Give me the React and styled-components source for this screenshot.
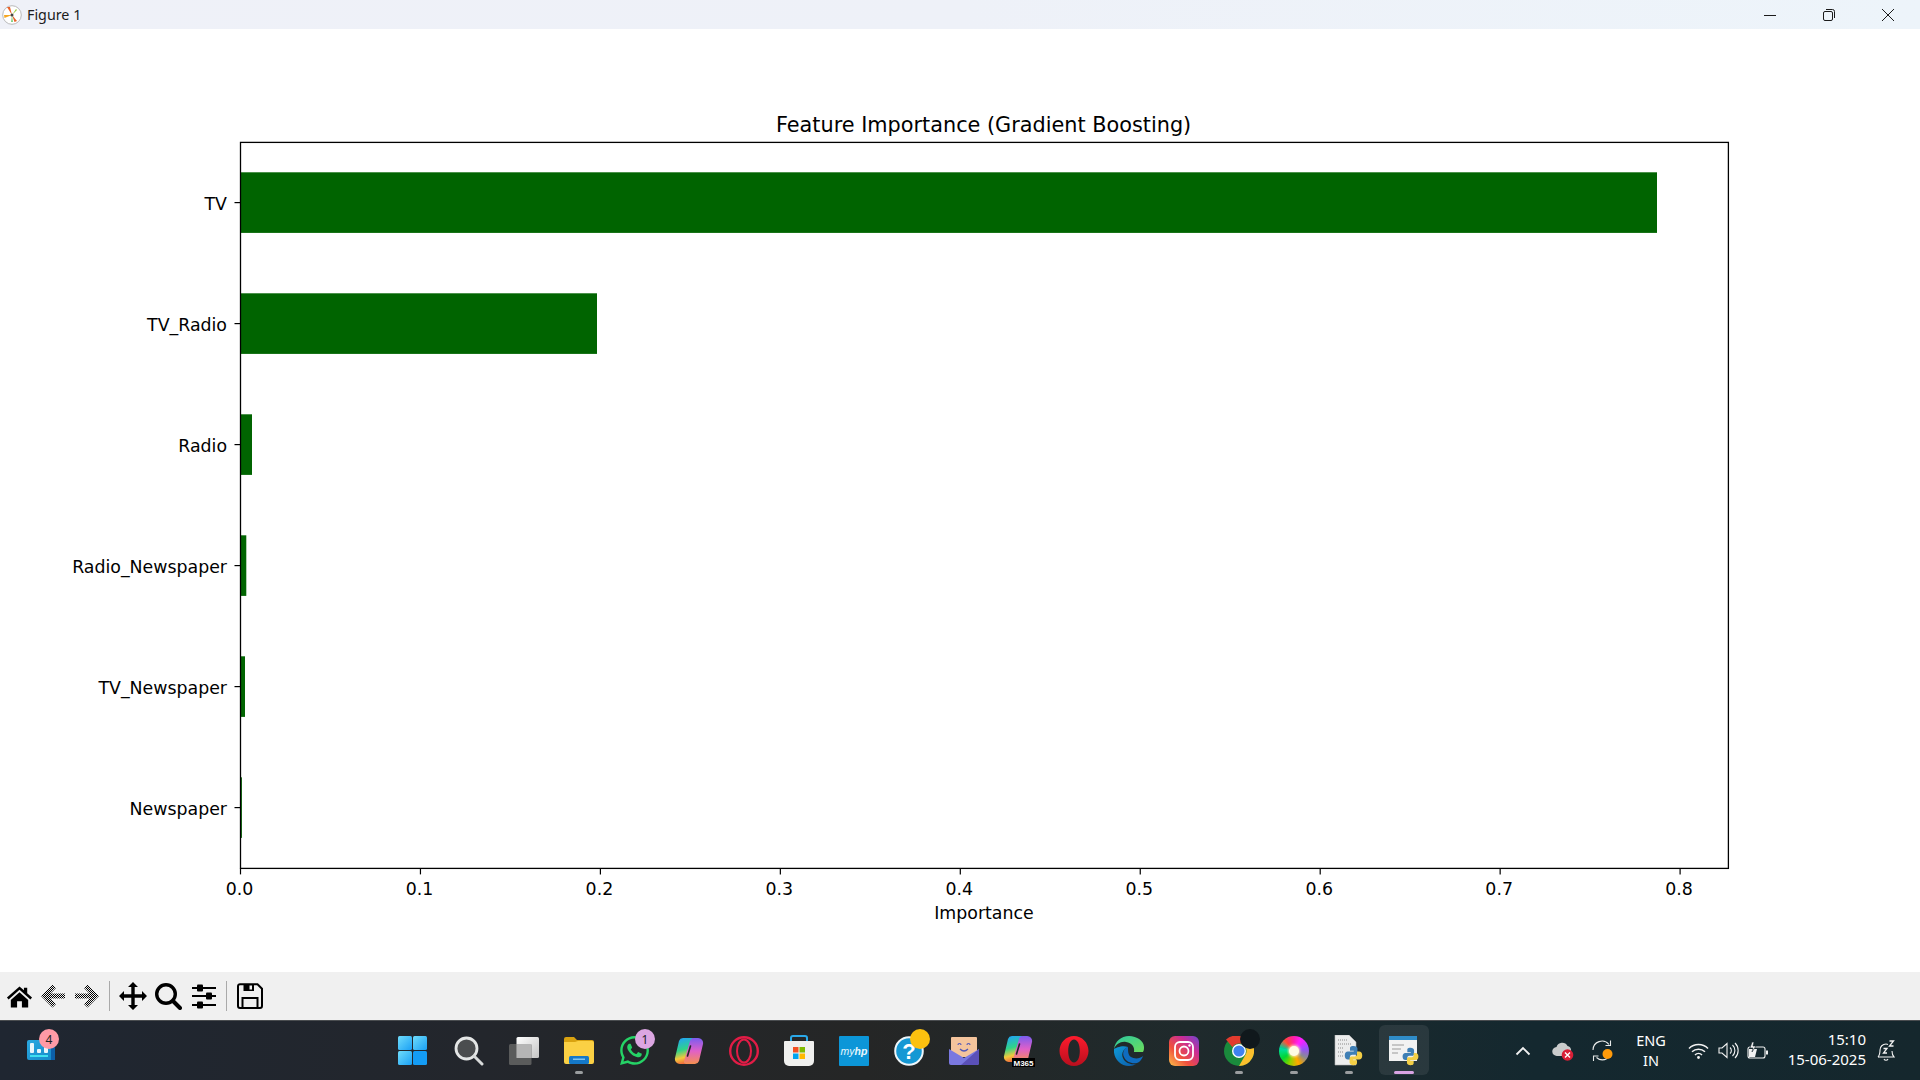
import React from "react";
import styled, { createGlobalStyle } from "styled-components";
import { FaWhatsapp } from "react-icons/fa";

const GlobalStyle = createGlobalStyle`
  html, body {
    margin: 0;
    padding: 0;
    width: 1920px;
    height: 1080px;
    overflow: hidden;
    background: #fff;
  }
`;

const Screen = styled.div`
  display: flex;
  flex-direction: column;
  width: 1920px;
  height: 1080px;
  font-family: "Noto Sans", "Open Sans", sans-serif;
`;

const TitleBar = styled.div`
  display: flex;
  align-items: center;
  flex: 0 0 29px;
  padding: 0 3px 0 2px;
  background: linear-gradient(90deg, #eff1f8 0%, #eef1f8 50%, #edf4fa 100%);
`;

const TitleText = styled.span`
  margin-left: 5px;
  font-size: 14.3px;
  color: #1c1c1c;
`;

const WindowControls = styled.div`
  display: flex;
  margin-left: auto;
`;

const WindowButton = styled.div`
  display: flex;
  align-items: center;
  justify-content: center;
  width: 59px;
  height: 29px;
  padding-left: ${(p) => p.$nudge || 0}px;
`;

const PlotArea = styled.div`
  flex: 1;
  min-height: 0;
  background: #fff;

  svg {
    display: block;
  }
  text {
    font-family: "DejaVu Sans", sans-serif;
    fill: #000;
  }
`;

const Toolbar = styled.div`
  display: flex;
  align-items: center;
  flex: 0 0 48px;
  padding-left: 2px;
  background: #f0f0f0;
`;

const ToolButton = styled.div`
  display: flex;
  align-items: center;
  justify-content: center;
  width: ${(p) => p.$w}px;
  height: 48px;
`;

const ToolSeparator = styled.div`
  width: 1px;
  height: 30px;
  margin: 0 5px 0 ${(p) => p.$before}px;
  background: #a9a9a9;
`;

const Taskbar = styled.div`
  display: grid;
  grid-template-columns: 384.5px auto 1fr;
  flex: 0 0 60px;
  box-sizing: border-box;
  border-top: 1px solid #4a4d50;
  background: linear-gradient(90deg, #1f2631 0%, #23262c 25%, #252626 45%, #1f2a2c 62%, #14282f 80%, #15272d 100%);
  color: #fff;
`;

const WidgetCell = styled.div`
  position: relative;
  padding: 19px 0 0 27px;
`;

const AppList = styled.div`
  display: flex;
`;

const AppCell = styled.div`
  position: relative;
  display: flex;
  align-items: center;
  justify-content: center;
  width: 55px;
  height: 59px;
  margin-right: ${(p) => p.$gap || 0}px;

  ${(p) =>
    p.$active &&
    `
    &::before {
      content: "";
      position: absolute;
      left: 2.5px;
      top: 4px;
      width: 50px;
      height: 50px;
      border-radius: 6px;
      background: rgba(255, 255, 255, 0.08);
    }
  `}

  ${(p) =>
    (p.$running || p.$active) &&
    `
    &::after {
      content: "";
      position: absolute;
      left: 50%;
      bottom: 6px;
      width: ${p.$active ? 20 : 8}px;
      height: 3px;
      border-radius: 2px;
      transform: translateX(-50%);
      background: ${p.$active ? "#d9a3e3" : "#9a9d9f"};
    }
  `}

  svg {
    position: relative;
    z-index: 1;
  }
`;

const Badge = styled.span`
  position: absolute;
  z-index: 2;
  left: ${(p) => p.$left}px;
  top: ${(p) => p.$top}px;
  display: flex;
  align-items: center;
  justify-content: center;
  width: 20px;
  height: 20px;
  border-radius: 50%;
  font-size: 12px;
  color: #222;
  background: ${(p) => p.$color};
`;

const RainbowWheel = styled.div`
  position: relative;
  width: 30px;
  height: 30px;
  border-radius: 50%;
  filter: blur(0.7px) saturate(1.3);
  background: conic-gradient(#f02c9c, #d030f0, #8c58d8, #8a8a90, #f0a818, #98cc20, #18c850, #10d0a0, #f05040, #f02c9c);

  &::after {
    content: "";
    position: absolute;
    left: 10px;
    top: 10px;
    width: 10px;
    height: 10px;
    border-radius: 50%;
    background: #fffbe8;
    box-shadow: 0 0 3px 1px #ffe8c0;
  }
`;

const Tray = styled.div`
  display: flex;
  align-items: center;
  justify-self: end;
  height: 59px;
  padding-right: 22px;
`;

const TrayCell = styled.div`
  display: flex;
  align-items: center;
  justify-content: center;
  width: ${(p) => p.$w}px;
  height: 59px;
`;

const LangBox = styled.div`
  width: 56px;
  margin-right: 4px;
  padding-bottom: 1px;
  font-size: 14.5px;
  line-height: 20px;
  text-align: center;
`;

const ClockBox = styled.div`
  width: 93px;
  margin-right: 8px;
  padding-bottom: 4px;
  font-size: 15px;
  line-height: 20px;
  text-align: right;
  white-space: nowrap;
`;

const rows = [
  { name: "TV", width: 1416.5 },
  { name: "TV_Radio", width: 356.5 },
  { name: "Radio", width: 11.5 },
  { name: "Radio_Newspaper", width: 5.8 },
  { name: "TV_Newspaper", width: 4.5 },
  { name: "Newspaper", width: 1.4 },
];

const AX = { left: 240.5, right: 1728.4, top: 142.4, bottom: 868.4 };
const xTicks = ["0.0", "0.1", "0.2", "0.3", "0.4", "0.5", "0.6", "0.7", "0.8"];

const Chart = () => (
  <svg width="1920" height="943" viewBox="0 29 1920 943">
    <text x="983.6" y="132" fontSize="20.8" textAnchor="middle">
      Feature Importance (Gradient Boosting)
    </text>
    {rows.map((r, i) => {
      const cy = 202.6 + i * 121;
      return (
        <g key={r.name}>
          <rect x={AX.left} y={cy - 30.3} width={r.width} height={60.6} fill="#006400" />
          <line x1={234.5} x2={AX.left} y1={cy} y2={cy} stroke="#000" strokeWidth="1.2" />
          <text x="227" y={cy + 7.3} fontSize="17.36" textAnchor="end">
            {r.name}
          </text>
        </g>
      );
    })}
    <rect
      x={AX.left}
      y={AX.top}
      width={AX.right - AX.left}
      height={AX.bottom - AX.top}
      fill="none"
      stroke="#000"
      strokeWidth="1.3"
    />
    {xTicks.map((t, i) => {
      const x = AX.left + i * 179.95;
      return (
        <g key={t}>
          <line x1={x} x2={x} y1={AX.bottom} y2={AX.bottom + 6} stroke="#000" strokeWidth="1.2" />
          <text x={x - 1} y="895" fontSize="17.36" textAnchor="middle">
            {t}
          </text>
        </g>
      );
    })}
    <text x="984" y="919" fontSize="17.36" textAnchor="middle">
      Importance
    </text>
  </svg>
);

const LogoIcon = () => (
  <svg width="20" height="20" viewBox="0 0 20 20">
    <circle cx="10" cy="10" r="9.3" fill="#fff" stroke="#aaa" strokeWidth="0.8" />
    <path d="M10 10 L5 2 L8 2 Z" fill="#e8622a" />
    <path d="M10 10 L15 16 L12.5 17 Z" fill="#e8622a" />
    <path d="M10 10 L2 10 L2.5 13 Z" fill="#f5a623" />
    <path d="M10 10 L14 4 L15 5 Z" fill="#9ccc3c" />
    <path d="M10 10 L9 17 L11 17 Z" fill="#7fd07f" />
    <circle cx="10" cy="10" r="1.5" fill="#444" />
  </svg>
);

const MinimizeIcon = () => (
  <svg width="12" height="12" viewBox="0 0 12 12">
    <line x1="0" x2="12" y1="6.5" y2="6.5" stroke="#1a1a1a" />
  </svg>
);

const RestoreIcon = () => (
  <svg width="12" height="12" viewBox="0 0 12 12" fill="none" stroke="#1a1a1a">
    <rect x="0.5" y="2.5" width="9" height="9" rx="1.5" />
    <path d="M3 0.5h6.5a2 2 0 0 1 2 2V9" />
  </svg>
);

const CloseIcon = () => (
  <svg width="12" height="12" viewBox="0 0 12 12" stroke="#1a1a1a">
    <path d="M0 0L12 12M12 0L0 12" />
  </svg>
);

const HomeIcon = () => (
  <svg width="27" height="27" viewBox="0 0 28 28">
    <path d="M14 3.5L1 15l1.7 2L14 7l11.3 10 1.7-2-5-4.4V5h-3.4v2.6z" />
    <path d="M5 17.5L14 9.5l9 8V25.500h-6.500v-6.500h-5v6.500H5z" />
  </svg>
);

const ArrowIcon = ({ flip }) => (
  <svg width="26" height="26" viewBox="0 0 26 26" style={flip ? { transform: "scaleX(-1)" } : undefined}>
    <defs>
      <pattern id={flip ? "ditherR" : "ditherL"} width="2" height="2" patternUnits="userSpaceOnUse">
        <rect width="1" height="1" fill="#000" />
        <rect x="1" y="1" width="1" height="1" fill="#000" />
      </pattern>
    </defs>
    <path
      d="M1 13L12.500 1.500 16 5l-5.500 5.500H25v5H10.500L16 21l-3.500 3.500z"
      fill={`url(#${flip ? "ditherR" : "ditherL"})`}
    />
  </svg>
);

const MoveIcon = () => (
  <svg width="28" height="28" viewBox="0 0 28 28">
    <path d="M14 0l5 5h-3.300v7.300H23V9l5 5-5 5v-3.300h-7.300V23H19l-5 5-5-5h3.300v-7.300H5V19l-5-5 5-5v3.300h7.300V5H9z" />
  </svg>
);

const ZoomIcon = () => (
  <svg width="28" height="28" viewBox="0 0 28 28" fill="none" stroke="#000">
    <circle cx="12" cy="12" r="9.300" strokeWidth="3.400" />
    <path d="M19 19l7 7" strokeWidth="4" strokeLinecap="round" />
  </svg>
);

const SlidersIcon = () => (
  <svg width="26" height="26" viewBox="0 0 26 26">
    <path d="M1 4h24v2H1zM1 12h24v2H1zM1 21h24v2H1z" />
    <rect x="6" y="1.500" width="6" height="7" rx="1" />
    <rect x="15" y="9.500" width="6" height="7" rx="1" />
    <rect x="6" y="18.500" width="6" height="7" rx="1" />
  </svg>
);

const SaveIcon = () => (
  <svg width="26" height="26" viewBox="0 0 26 26" fill="none" stroke="#000" strokeWidth="2">
    <path d="M3 1.200h17.500L25 5.700V23a2 2 0 0 1-2 2H3a2 2 0 0 1-2-2V3.200a2 2 0 0 1 2-2z" />
    <rect x="5.500" y="15" width="15" height="10" />
    <rect x="6.500" y="1.200" width="10.500" height="6.800" fill="#000" stroke="none" />
    <rect x="12.500" y="2.500" width="2.500" height="4" fill="#f0f0f0" stroke="none" />
  </svg>
);

const WidgetIcon = () => (
  <svg width="28" height="21" viewBox="0 0 28 21">
    <defs>
      <linearGradient id="widgetBg" x1="0" y1="0" x2="1" y2="1">
        <stop offset="0" stopColor="#2aa8e0" />
        <stop offset="1" stopColor="#1488c8" />
      </linearGradient>
    </defs>
    <rect x="0" y="0" width="28" height="20" rx="2" fill="url(#widgetBg)" />
    <rect x="24" y="1" width="4" height="19" fill="#0c5fa8" />
    <rect x="3" y="3" width="4" height="10" rx="1" fill="#eaf6fc" />
    <rect x="10" y="9" width="4" height="4" rx="1" fill="#eaf6fc" />
    <rect x="17" y="6" width="4" height="7" rx="1" fill="#eaf6fc" />
    <rect x="3" y="15" width="18" height="2" fill="#3fe0f0" />
  </svg>
);

const StartIcon = () => (
  <svg width="29" height="29" viewBox="0 0 29 29">
    <defs>
      <linearGradient id="startA" x1="0" y1="0" x2="1" y2="1">
        <stop offset="0" stopColor="#6fdcfb" />
        <stop offset="1" stopColor="#1aa0f5" />
      </linearGradient>
    </defs>
    <rect width="14" height="14" rx="1.500" fill="url(#startA)" />
    <rect x="15" width="14" height="14" rx="1.500" fill="url(#startA)" />
    <rect y="15" width="14" height="14" rx="1.500" fill="url(#startA)" />
    <rect x="15" y="15" width="14" height="14" rx="1.500" fill="#149cf5" />
  </svg>
);

const SearchIcon = () => (
  <svg width="30" height="30" viewBox="0 0 30 30" fill="none">
    <circle cx="12.500" cy="12.500" r="10.500" fill="#4b4d4f" stroke="#e4e6e6" strokeWidth="2.800" />
    <path d="M20 20l8 8" stroke="#d8dada" strokeWidth="3" strokeLinecap="round" />
  </svg>
);

const TaskViewIcon = () => (
  <svg width="30" height="28" viewBox="0 0 30 28">
    <defs>
      <linearGradient id="tvFront" x1="0" y1="0" x2="1" y2="1">
        <stop offset="0" stopColor="#ffffff" />
        <stop offset="1" stopColor="#c4c4c4" />
      </linearGradient>
    </defs>
    <rect x="7.500" y="0" width="22.500" height="21" rx="1.500" fill="url(#tvFront)" />
    <rect x="0" y="7" width="22.500" height="21" rx="1.500" fill="#5f5f5f" fillOpacity="0.92" />
    <rect x="7.500" y="7" width="15" height="14" fill="#b5b5b5" />
  </svg>
);

const FolderIcon = () => (
  <svg width="30" height="27" viewBox="0 0 30 27">
    <path d="M0 2a2 2 0 0 1 2-2h8l3 3h15a2 2 0 0 1 2 2v3H0z" fill="#d9a210" />
    <path d="M0 5h11l3-1h14a2 2 0 0 1 2 2v19a2 2 0 0 1-2 2H2a2 2 0 0 1-2-2z" fill="#fbd044" />
    <rect x="5" y="19" width="20" height="8" rx="1.500" fill="#1478c8" />
    <rect x="9" y="21.500" width="12" height="1.500" fill="#7fc4f0" />
  </svg>
);

const COPILOT_BLOB = "M9 1h9a2 2 0 0 1 2 2.500L14 24a4 4 0 0 1-4 3H6a5 5 0 0 1-5-6L5 4a4.500 4.500 0 0 1 4-3z";

const CopilotShape = ({ id }) => (
  <>
    <defs>
      <linearGradient id={`${id}a`} x1="0.3" y1="0" x2="0.5" y2="1">
        <stop offset="0" stopColor="#22a4f4" />
        <stop offset="0.45" stopColor="#30d488" />
        <stop offset="0.75" stopColor="#f4c83c" />
        <stop offset="1" stopColor="#f0603c" />
      </linearGradient>
      <linearGradient id={`${id}b`} x1="0.5" y1="1" x2="0.5" y2="0">
        <stop offset="0" stopColor="#7a5cf0" />
        <stop offset="0.5" stopColor="#e060c8" />
        <stop offset="1" stopColor="#f59050" />
      </linearGradient>
    </defs>
    <path d={COPILOT_BLOB} fill={`url(#${id}a)`} />
    <path d={COPILOT_BLOB} transform="rotate(180 15 14)" fill={`url(#${id}b)`} />
    <path d="M16.500 9L13.500 19" stroke="#232426" strokeWidth="1.600" strokeLinecap="round" />
  </>
);

const CopilotIcon = ({ id }) => (
  <svg width="30" height="28" viewBox="0 0 30 28">
    <CopilotShape id={id} />
  </svg>
);

const OperaGxIcon = () => (
  <svg width="30" height="30" viewBox="0 0 30 30" fill="none" stroke="#e21c46">
    <circle cx="15" cy="15" r="13.800" strokeWidth="2.400" />
    <ellipse cx="15" cy="15" rx="7" ry="11.500" strokeWidth="2" />
  </svg>
);

const StoreIcon = () => (
  <svg width="30" height="31" viewBox="0 0 30 31">
    <path d="M7 7V3a2 2 0 0 1 2-2h12a2 2 0 0 1 2 2v4" fill="none" stroke="#2aa8e8" strokeWidth="2" />
    <path d="M1 6h28a1 1 0 0 1 1 1v19a5 5 0 0 1-5 5H5a5 5 0 0 1-5-5V7a1 1 0 0 1 1-1z" fill="#f0f0ee" />
    <rect x="9" y="12" width="5.500" height="5.500" fill="#f25022" />
    <rect x="15.500" y="12" width="5.500" height="5.500" fill="#7fba00" />
    <rect x="9" y="18.500" width="5.500" height="5.500" fill="#00a4ef" />
    <rect x="15.500" y="18.500" width="5.500" height="5.500" fill="#ffb900" />
  </svg>
);

const MyHpIcon = () => (
  <svg width="30" height="30" viewBox="0 0 30 30">
    <rect width="30" height="30" rx="1" fill="#0c96d8" />
    <text x="15" y="19" fontSize="10.500" fontStyle="italic" textAnchor="middle" fill="#e8f6fc" fontFamily="Liberation Sans, sans-serif">
      my<tspan fontWeight="700">hp</tspan>
    </text>
  </svg>
);

const HelpIcon = () => (
  <svg width="30" height="30" viewBox="0 0 30 30">
    <circle cx="15" cy="15" r="13.800" fill="#1598d4" stroke="#eef6fa" strokeWidth="2" />
    <text x="15" y="23" fontSize="22" fontWeight="700" textAnchor="middle" fill="#fff" fontFamily="Liberation Sans, sans-serif">
      ?
    </text>
  </svg>
);

const MailIcon = () => (
  <svg width="30" height="28" viewBox="0 0 30 28">
    <rect x="2" y="0" width="26" height="20" rx="1" fill="#f4c49c" />
    <path d="M9 8a1.500 1.500 0 0 1 3 0M18 8a1.500 1.500 0 0 1 3 0M11 12q4 4 8 0" fill="none" stroke="#5058b8" strokeWidth="1.200" />
    <path d="M0 12l15 9 15-9v14a2 2 0 0 1-2 2H2a2 2 0 0 1-2-2z" fill="#7a78e0" />
    <path d="M30 12v14a2 2 0 0 1-2 2H12z" fill="#5a50b8" />
  </svg>
);

const M365Icon = () => (
  <svg width="32" height="32" viewBox="0 0 32 32">
    <CopilotShape id="m365" />
    <rect x="9" y="23" width="23" height="9" fill="#000" />
    <text x="20.500" y="30.500" fontSize="8" fontWeight="700" textAnchor="middle" fill="#fff" fontFamily="Liberation Sans, sans-serif">
      M365
    </text>
  </svg>
);

const OperaIcon = () => (
  <svg width="30" height="30" viewBox="0 0 30 30">
    <defs>
      <linearGradient id="operaRed" x1="0" y1="0" x2="0" y2="1">
        <stop offset="0" stopColor="#ff1b2d" />
        <stop offset="1" stopColor="#b80f1e" />
      </linearGradient>
    </defs>
    <path
      fillRule="evenodd"
      fill="url(#operaRed)"
      d="M15 0C7 0 .5 6.700.5 15S7 30 15 30s14.500-6.700 14.500-15S23 0 15 0zM15 3.500c3.500 0 5.800 5 5.800 11.500S18.500 26.500 15 26.500 9.200 21.500 9.200 15 11.500 3.500 15 3.500z"
    />
  </svg>
);

const EdgeIcon = () => (
  <svg width="30" height="30" viewBox="0 0 30 30">
    <defs>
      <linearGradient id="edgeA" x1="0" y1="0" x2="1" y2="1">
        <stop offset="0" stopColor="#2cc8a0" />
        <stop offset="1" stopColor="#6cdc5c" />
      </linearGradient>
      <linearGradient id="edgeB" x1="0" y1="0" x2="1" y2="1">
        <stop offset="0" stopColor="#0f9ad8" />
        <stop offset="1" stopColor="#0c5aa8" />
      </linearGradient>
    </defs>
    <path d="M15 0C7 0 1 5.500 0 13c2-5 7-8 12-7 6 1 9 5 8 10h9c1-2 1-3 1-5C30 5 23 0 15 0z" fill="url(#edgeA)" />
    <path d="M0 13c-1 9 6 17 15 17 3 0 5-1 7-2-5 1-11-1-13-6-2-4 0-9 5-11-6-2-12 1-14 2z" fill="url(#edgeB)" />
    <path d="M14 11c-4 1-6 6-4 10 2 5 8 7 13 6 3-1 5-4 6-7-3 3-9 3-12 1-3-2-3-6-3-10z" fill="#0f6cc0" />
  </svg>
);

const InstagramIcon = () => (
  <svg width="30" height="30" viewBox="0 0 30 30">
    <defs>
      <linearGradient id="igBg" x1="0" y1="1" x2="1" y2="0">
        <stop offset="0" stopColor="#fdc14a" />
        <stop offset="0.35" stopColor="#f0503c" />
        <stop offset="0.7" stopColor="#c82c98" />
        <stop offset="1" stopColor="#6a48d0" />
      </linearGradient>
    </defs>
    <rect width="30" height="30" rx="6" fill="url(#igBg)" />
    <rect x="6" y="6" width="18" height="18" rx="5" fill="none" stroke="#fff" strokeWidth="1.800" />
    <circle cx="15" cy="15" r="4.500" fill="none" stroke="#fff" strokeWidth="1.800" />
    <circle cx="20.500" cy="9.500" r="1.200" fill="#fff" />
  </svg>
);

const ChromeIcon = () => (
  <svg width="30" height="30" viewBox="0 0 30 30">
    <circle cx="15" cy="15" r="15" fill="#1a8a3c" />
    <path d="M15 0a15 15 0 0 1 13 7.500H15a7.500 7.500 0 0 0-6.500 3.750L2 3.500A15 15 0 0 1 15 0z" fill="#e33b2e" />
    <path d="M28 7.500A15 15 0 0 1 15 30l6.500-11.250A7.500 7.500 0 0 0 15 7.500z" fill="#fbc02d" />
    <circle cx="15" cy="15" r="7" fill="#fff" />
    <circle cx="15" cy="15" r="5.600" fill="#3f82f0" />
  </svg>
);

const PyLogo = ({ x, y, size }) => (
  <g transform={`translate(${x} ${y}) scale(${size / 24})`}>
    <path d="M12 1C8 1 8 2.700 8 4v2.500h4.300v1H5.500C3.500 7.500 2 9 2 12s1.500 4.500 3.500 4.500H8v-3C8 12 9 11 10.500 11h4c1.200 0 2-1 2-2V4c0-1.700-1.800-3-4.500-3z" fill="#3f7fb5" />
    <path d="M12 23c4 0 4-1.700 4-3v-2.500h-4.300v-1h6.800c2 0 3.500-1.500 3.500-4.500s-1.500-4.500-3.500-4.500H16v3c0 1.500-1 2.500-2.500 2.500h-4c-1.200 0-2 1-2 2v5c0 1.700 1.800 3 4.500 3z" fill="#f4cf46" />
  </g>
);

const PyFileIcon = () => (
  <svg width="30" height="32" viewBox="0 0 30 32">
    <path d="M1 0h14l7 7v23H1z" fill="#eceded" stroke="#b5b5b5" strokeWidth="0.600" />
    <path d="M4 5h9M4 9h13M4 13h6M4 17h5M4 21h5" stroke="#8a8a8a" strokeDasharray="1 1" />
    <PyLogo x={9} y={10} size={21} />
  </svg>
);

const PyWindowIcon = () => (
  <svg width="30" height="30" viewBox="0 0 30 30">
    <rect x="0" y="0" width="28" height="25" fill="#f2f2f2" />
    <rect x="0" y="0" width="28" height="4" fill="#2f8cc8" />
    <path d="M3 9h12M3 13h9M3 17h6" stroke="#9a9a9a" strokeWidth="1.200" />
    <PyLogo x={12} y={11} size={19} />
  </svg>
);

const ChevronIcon = () => (
  <svg width="16" height="10" viewBox="0 0 16 10" fill="none" stroke="#f2f2f2" strokeWidth="1.800">
    <path d="M1.500 8.500L8 2l6.500 6.500" />
  </svg>
);

const CloudIcon = () => (
  <svg width="22" height="22" viewBox="0 0 22 22">
    <path d="M5 16a4.500 4.500 0 0 1-.5-9 6 6 0 0 1 11-1 4.500 4.500 0 0 1 1 8.500V16z" fill="#c9cbcb" />
    <circle cx="15.500" cy="15" r="5.800" fill="#d81f36" />
    <path d="M13 12.500l5 5M18 12.500l-5 5" stroke="#fff" strokeWidth="1.400" />
  </svg>
);

const SyncIcon = () => (
  <svg width="22" height="24" viewBox="0 0 22 24" fill="none" stroke="#e8eaea" strokeWidth="1.100">
    <path d="M1 11a9 9 0 0 1 16-5.500" />
    <path d="M18.500 1.500v5h-5" />
    <path d="M15 19.500a9 9 0 0 1-10.500-1" />
    <path d="M1.500 22v-5h5" />
    <circle cx="15.500" cy="15" r="5" fill="#ff9a0a" stroke="none" />
  </svg>
);

const WifiIcon = () => (
  <svg width="21" height="16" viewBox="0 0 21 16" fill="none" stroke="#f2f2f2" strokeWidth="1.500">
    <path d="M1 5.500a13.500 13.500 0 0 1 19 0" />
    <path d="M4 8.800a9.500 9.500 0 0 1 13 0" />
    <path d="M7 12a5 5 0 0 1 7 0" />
    <circle cx="10.500" cy="14.500" r="1.400" fill="#f2f2f2" stroke="none" />
  </svg>
);

const VolumeIcon = () => (
  <svg width="21" height="17" viewBox="0 0 21 17" fill="none" stroke="#f2f2f2" strokeWidth="1.100">
    <path d="M1 6h3l5-4.500v14L4 11H1z" />
    <path d="M12 5.500a4 4 0 0 1 0 6" />
    <path d="M14.500 3a7.500 7.500 0 0 1 0 11" />
    <path d="M17 1a10.500 10.500 0 0 1 0 15" />
  </svg>
);

const BatteryIcon = () => (
  <svg width="22" height="18" viewBox="0 0 22 18" fill="none" stroke="#f2f2f2" strokeWidth="1.100">
    <rect x="1" y="5" width="17" height="11" rx="2" />
    <rect x="19" y="8.500" width="2" height="4" fill="#f2f2f2" stroke="none" />
    <path d="M2 15V7h8l-2 8z" fill="#f2f2f2" stroke="none" />
    <path d="M5 0L3 6h3l-1 4 4-6H6l1-4z" fill="#f2f2f2" stroke="#15272d" strokeWidth="0.600" />
  </svg>
);

const BellIcon = () => (
  <svg width="18" height="22" viewBox="0 0 18 22" fill="none" stroke="#f2f2f2" strokeWidth="1.100">
    <path d="M1 17c2-2 2-4 2-7a6 6 0 0 1 6-6c1 0 1.500.2 2 .4" />
    <path d="M15 11c0 2.500.5 4.500 2 6H1" />
    <path d="M7 19a2.200 2.200 0 0 0 4 0" />
    <path d="M6.500 8.500h3.500L6.500 13H10" strokeWidth="1.300" />
    <path d="M12.500 1h4l-4 5h4" strokeWidth="1.300" />
  </svg>
);

const apps = [
  { key: "start", icon: <StartIcon />, gap: 2 },
  { key: "search", icon: <SearchIcon /> },
  { key: "tasks", icon: <TaskViewIcon /> },
  { key: "files", icon: <FolderIcon />, running: true },
  { key: "whatsapp", icon: <FaWhatsapp size={33} color="#25d366" />, badge: { text: "1", color: "#dca6e2" } },
  { key: "copilot", icon: <CopilotIcon id="cop" /> },
  { key: "operagx", icon: <OperaGxIcon /> },
  { key: "store", icon: <StoreIcon /> },
  { key: "myhp", icon: <MyHpIcon /> },
  { key: "help", icon: <HelpIcon />, badge: { text: "", color: "#fcc10f" } },
  { key: "mail", icon: <MailIcon /> },
  { key: "m365", icon: <M365Icon /> },
  { key: "opera", icon: <OperaIcon /> },
  { key: "edge", icon: <EdgeIcon /> },
  { key: "instagram", icon: <InstagramIcon /> },
  { key: "chrome", icon: <ChromeIcon />, running: true, badge: { text: "", color: "#10181c" } },
  { key: "wheel", icon: <RainbowWheel />, running: true },
  { key: "pyfile", icon: <PyFileIcon />, running: true },
  { key: "pywindow", icon: <PyWindowIcon />, active: true },
];

const App = () => (
  <>
    <GlobalStyle />
    <Screen>
      <TitleBar>
        <LogoIcon />
        <TitleText>Figure 1</TitleText>
        <WindowControls>
          <WindowButton $nudge={3}><MinimizeIcon /></WindowButton>
          <WindowButton><RestoreIcon /></WindowButton>
          <WindowButton><CloseIcon /></WindowButton>
        </WindowControls>
      </TitleBar>
      <PlotArea>
        <Chart />
      </PlotArea>
      <Toolbar>
        <ToolButton $w={34}><HomeIcon /></ToolButton>
        <ToolButton $w={34}><ArrowIcon /></ToolButton>
        <ToolButton $w={34}><ArrowIcon flip /></ToolButton>
        <ToolSeparator $before={5} />
        <ToolButton $w={35.5}><MoveIcon /></ToolButton>
        <ToolButton $w={35.5}><ZoomIcon /></ToolButton>
        <ToolButton $w={35.5}><SlidersIcon /></ToolButton>
        <ToolSeparator $before={4.5} />
        <ToolButton $w={35}><SaveIcon /></ToolButton>
      </Toolbar>
      <Taskbar>
        <WidgetCell>
          <WidgetIcon />
          <Badge $color="#ff9aa6" $left={39} $top={8}>4</Badge>
        </WidgetCell>
        <AppList>
          {apps.map((a) => (
            <AppCell key={a.key} $running={a.running} $active={a.active} $gap={a.gap}>
              {a.icon}
              {a.badge && (
                <Badge $color={a.badge.color} $left={28.5} $top={8}>
                  {a.badge.text}
                </Badge>
              )}
            </AppCell>
          ))}
        </AppList>
        <Tray>
          <TrayCell $w={40}><ChevronIcon /></TrayCell>
          <TrayCell $w={40}><CloudIcon /></TrayCell>
          <TrayCell $w={40}><SyncIcon /></TrayCell>
          <LangBox>ENG<br />IN</LangBox>
          <TrayCell $w={30}><WifiIcon /></TrayCell>
          <TrayCell $w={30}><VolumeIcon /></TrayCell>
          <TrayCell $w={30}><BatteryIcon /></TrayCell>
          <ClockBox>15:10<br />15-06-2025</ClockBox>
          <TrayCell $w={24}><BellIcon /></TrayCell>
        </Tray>
      </Taskbar>
    </Screen>
  </>
);

export default App;
